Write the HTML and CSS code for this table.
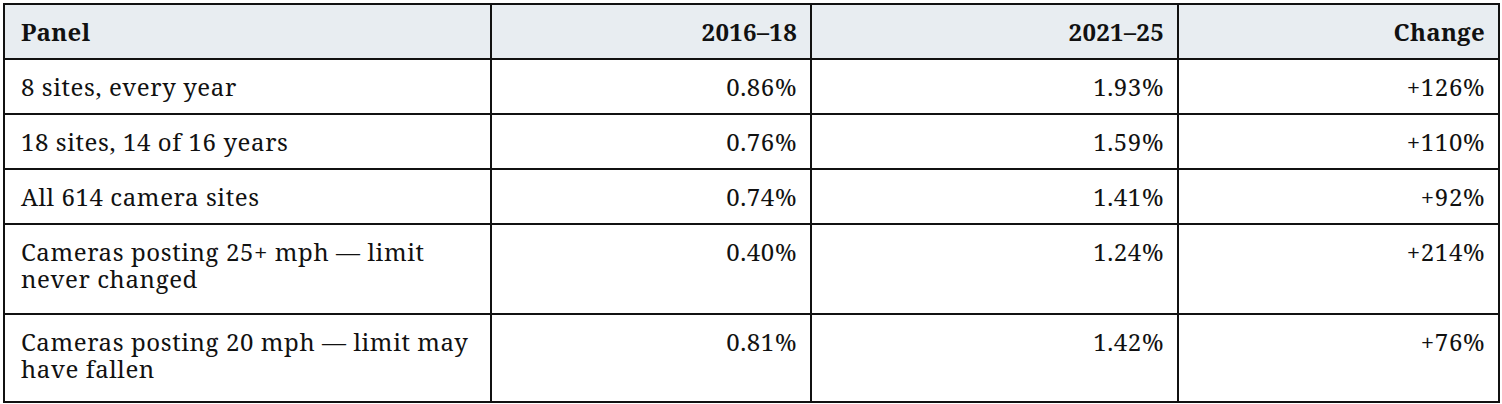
FILE: index.html
```html
<!DOCTYPE html>
<html lang="en">
<head>
<meta charset="utf-8">
<title>Panel comparison</title>
<link rel="stylesheet" href="styles.css">
</head>
<body>
<div class="wrap">
  <table class="data">
    <colgroup>
      <col class="c1">
      <col class="c2">
      <col class="c3">
      <col class="c4">
    </colgroup>
    <thead>
      <tr>
        <th class="label">Panel</th>
        <th class="num">2016–18</th>
        <th class="num">2021–25</th>
        <th class="num">Change</th>
      </tr>
    </thead>
    <tbody>
      <tr>
        <td class="label">8 sites, every year</td>
        <td class="num">0.86%</td>
        <td class="num">1.93%</td>
        <td class="num">+126%</td>
      </tr>
      <tr>
        <td class="label">18 sites, 14 of 16 years</td>
        <td class="num">0.76%</td>
        <td class="num">1.59%</td>
        <td class="num">+110%</td>
      </tr>
      <tr>
        <td class="label">All 614 camera sites</td>
        <td class="num">0.74%</td>
        <td class="num">1.41%</td>
        <td class="num">+92%</td>
      </tr>
      <tr class="tall">
        <td class="label">Cameras posting 25+ mph — limit never changed</td>
        <td class="num">0.40%</td>
        <td class="num">1.24%</td>
        <td class="num">+214%</td>
      </tr>
      <tr class="tall last">
        <td class="label">Cameras posting 20 mph — limit may have fallen</td>
        <td class="num">0.81%</td>
        <td class="num">1.42%</td>
        <td class="num">+76%</td>
      </tr>
    </tbody>
  </table>
</div>
</body>
</html>
```
FILE: styles.css
```css
html, body {
  margin: 0;
  padding: 0;
  background: #ffffff;
}

body {
  font-family: "Noto Serif", "Liberation Serif", serif;
  color: #111111;
}

.wrap {
  padding: 3px 2px 0 3px;
}

.data {
  width: 1497px;
  table-layout: fixed;
  border-collapse: separate;
  border-spacing: 0;
  border: 2px solid #111111;
  font-size: 24px;
  line-height: 27px;
  letter-spacing: 0.6px;
}

.c1 { width: 487px; }
.c2 { width: 320px; }
.c3 { width: 367px; }
.c4 { width: 319px; }

.data th,
.data td {
  padding: 13px 16px 13px 16px;
  vertical-align: top;
  border-right: 2px solid #111111;
  border-bottom: 2px solid #111111;
}

.data th:last-child,
.data td:last-child {
  border-right: none;
}

.data thead th {
  background: #e8edf1;
  font-weight: bold;
  letter-spacing: 0.3px;
}

.data .label {
  text-align: left;
  padding-right: 6px;
}

.data .num {
  text-align: right;
  padding-right: 13px;
}

.data tr.tall td {
  padding-bottom: 21px;
}

.data tr.last td {
  border-bottom: none;
  padding-bottom: 19px;
}
```
